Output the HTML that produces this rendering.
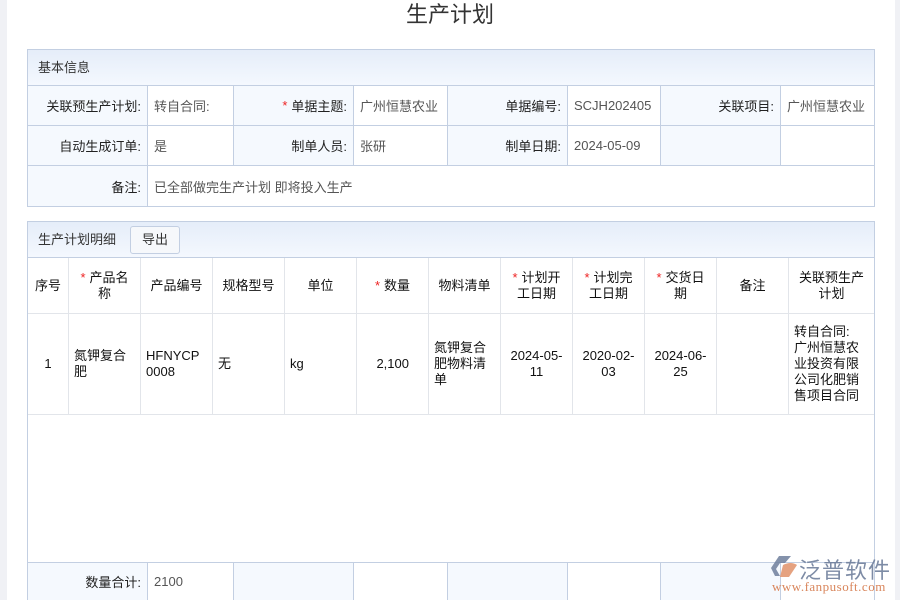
<!DOCTYPE html>
<html style="width:900px;height:600px;overflow:hidden"><head><meta charset="utf-8"><style>
*{margin:0;padding:0;box-sizing:border-box}
body{width:900px;height:600px;overflow:hidden;background:#fff;position:relative;font-family:"Liberation Sans","Noto Sans CJK SC",sans-serif;font-size:13px;color:#333}
.a{position:absolute}
.strip{background:#f0f1f5;top:0;height:600px}
.title{left:0;width:900px;top:1px;text-align:center;font-size:22px;line-height:28px;color:#333}
.panel{border:1px solid #c3cfe2;background:#fff}
.hd{background:linear-gradient(#e5edf9,#f4f8fe);border-bottom:1px solid #c3cfe2;font-size:13px;color:#333;padding-left:10px}
.c{position:absolute;border-right:1px solid #c3cfe2;border-bottom:1px solid #c3cfe2;display:flex;align-items:center;font-size:13px}
.l{background:#f5f9fe;justify-content:flex-end;padding-right:6px;color:#222}
.v{background:#fff;padding-left:6px;color:#555}
.r{color:#e22;margin-right:4px}
.t{position:absolute;border-right:1px solid #e2e5ea;border-bottom:1px solid #e2e5ea;display:flex;align-items:center;font-size:13px;color:#111;line-height:16px}
.th{justify-content:center;text-align:center}
.btn{border:1px solid #c3cfe2;border-radius:3px;background:#f6f8fb;text-align:center;line-height:26px}
</style></head><body>
<div class="a strip" style="left:0;width:7px"></div>
<div class="a strip" style="left:895px;width:5px"></div>
<div class="a title">生产计划</div>

<div class="a panel" style="left:27px;top:49px;width:848px;height:158px"></div>
<div class="a hd" style="left:28px;top:50px;width:846px;height:36px;line-height:36px">基本信息</div>
<div class="c l" style="left:28px;top:86px;width:120px;height:40px">关联预生产计划:</div>
<div class="c v" style="left:148px;top:86px;width:86px;height:40px">转自合同:</div>
<div class="c l" style="left:234px;top:86px;width:120px;height:40px"><span class="r">*</span>单据主题:</div>
<div class="c v" style="left:354px;top:86px;width:94px;height:40px">广州恒慧农业</div>
<div class="c l" style="left:448px;top:86px;width:120px;height:40px">单据编号:</div>
<div class="c v" style="left:568px;top:86px;width:93px;height:40px">SCJH202405</div>
<div class="c l" style="left:661px;top:86px;width:120px;height:40px">关联项目:</div>
<div class="c v" style="left:781px;top:86px;width:93px;height:40px;border-right:none">广州恒慧农业</div>
<div class="c l" style="left:28px;top:126px;width:120px;height:40px">自动生成订单:</div>
<div class="c v" style="left:148px;top:126px;width:86px;height:40px">是</div>
<div class="c l" style="left:234px;top:126px;width:120px;height:40px">制单人员:</div>
<div class="c v" style="left:354px;top:126px;width:94px;height:40px">张研</div>
<div class="c l" style="left:448px;top:126px;width:120px;height:40px">制单日期:</div>
<div class="c v" style="left:568px;top:126px;width:93px;height:40px">2024-05-09</div>
<div class="c l" style="left:661px;top:126px;width:120px;height:40px"></div>
<div class="c v" style="left:781px;top:126px;width:93px;height:40px;border-right:none"></div>
<div class="c l" style="left:28px;top:166px;width:120px;height:40px;border-bottom:none">备注:</div>
<div class="c v" style="left:148px;top:166px;width:726px;height:40px;border:none">已全部做完生产计划 即将投入生产</div>

<div class="a panel" style="left:27px;top:221px;width:848px;height:379px;border-bottom:none"></div>
<div class="a hd" style="left:28px;top:222px;width:846px;height:36px;line-height:36px">生产计划明细</div>
<div class="a btn" style="left:130px;top:226px;width:50px;height:28px">导出</div>

<div class="t th" style="left:28px;top:258px;width:41px;height:56px">序号</div>
<div class="t th" style="left:69px;top:258px;width:72px;height:56px"><div><span class="r">*</span>产品名<br>称</div></div>
<div class="t th" style="left:141px;top:258px;width:72px;height:56px">产品编号</div>
<div class="t th" style="left:213px;top:258px;width:72px;height:56px">规格型号</div>
<div class="t th" style="left:285px;top:258px;width:72px;height:56px">单位</div>
<div class="t th" style="left:357px;top:258px;width:72px;height:56px"><span class="r">*</span>数量</div>
<div class="t th" style="left:429px;top:258px;width:72px;height:56px">物料清单</div>
<div class="t th" style="left:501px;top:258px;width:72px;height:56px"><div><span class="r">*</span>计划开<br>工日期</div></div>
<div class="t th" style="left:573px;top:258px;width:72px;height:56px"><div><span class="r">*</span>计划完<br>工日期</div></div>
<div class="t th" style="left:645px;top:258px;width:72px;height:56px"><div><span class="r">*</span>交货日<br>期</div></div>
<div class="t th" style="left:717px;top:258px;width:72px;height:56px">备注</div>
<div class="t th" style="left:789px;top:258px;width:85px;height:56px;border-right:none">关联预生产<br>计划</div>

<div class="t th" style="left:28px;top:314px;width:41px;height:101px">1</div>
<div class="t" style="left:69px;top:314px;width:72px;height:101px;padding-left:5px">氮钾复合<br>肥</div>
<div class="t" style="left:141px;top:314px;width:72px;height:101px;padding-left:5px">HFNYCP<br>0008</div>
<div class="t" style="left:213px;top:314px;width:72px;height:101px;padding-left:5px">无</div>
<div class="t" style="left:285px;top:314px;width:72px;height:101px;padding-left:5px">kg</div>
<div class="t" style="left:357px;top:314px;width:72px;height:101px;justify-content:flex-end;padding-right:19px">2,100</div>
<div class="t" style="left:429px;top:314px;width:72px;height:101px;padding-left:5px">氮钾复合<br>肥物料清<br>单</div>
<div class="t th" style="left:501px;top:314px;width:72px;height:101px">2024-05-<br>11</div>
<div class="t th" style="left:573px;top:314px;width:72px;height:101px">2020-02-<br>03</div>
<div class="t th" style="left:645px;top:314px;width:72px;height:101px">2024-06-<br>25</div>
<div class="t" style="left:717px;top:314px;width:72px;height:101px"></div>
<div class="t" style="left:789px;top:314px;width:85px;height:101px;padding-left:5px;border-right:none">转自合同:<br>广州恒慧农<br>业投资有限<br>公司化肥销<br>售项目合同</div>

<div class="a" style="left:28px;top:562px;width:846px;height:1px;background:#c3cfe2"></div>
<div class="c l" style="left:28px;top:563px;width:120px;height:37px;border-bottom:none">数量合计:</div>
<div class="c v" style="left:148px;top:563px;width:86px;height:37px;border-bottom:none">2100</div>
<div class="c l" style="left:234px;top:563px;width:120px;height:37px;border-bottom:none"></div>
<div class="c v" style="left:354px;top:563px;width:94px;height:37px;border-bottom:none"></div>
<div class="c l" style="left:448px;top:563px;width:120px;height:37px;border-bottom:none"></div>
<div class="c v" style="left:568px;top:563px;width:93px;height:37px;border-bottom:none"></div>
<div class="c l" style="left:661px;top:563px;width:120px;height:37px;border-bottom:none"></div>
<div class="c v" style="left:781px;top:563px;width:93px;height:37px;border-right:none;border-bottom:none"></div>

<svg class="a" style="left:771px;top:555px" width="28" height="26" viewBox="0 0 28 26">
<path d="M8 1 L20 1 L14 8 L9 8 L5 14 L9 21 L4 21 L0 13 Z" fill="#6f7f9c" opacity=".85"/>
<path d="M12 10 Q20 6 26 10 L18 22 L9 22 Z" fill="#e0926a" opacity=".85"/>
</svg>
<div class="a" style="left:799px;top:553px;font-size:22px;color:#6f7f9c;opacity:.9;letter-spacing:1px">泛普软件</div>
<div class="a" style="left:772px;top:579px;font-family:'Liberation Serif',serif;font-size:13px;color:#d9865c;letter-spacing:.5px">www.fanpusoft.com</div>
</body></html>
